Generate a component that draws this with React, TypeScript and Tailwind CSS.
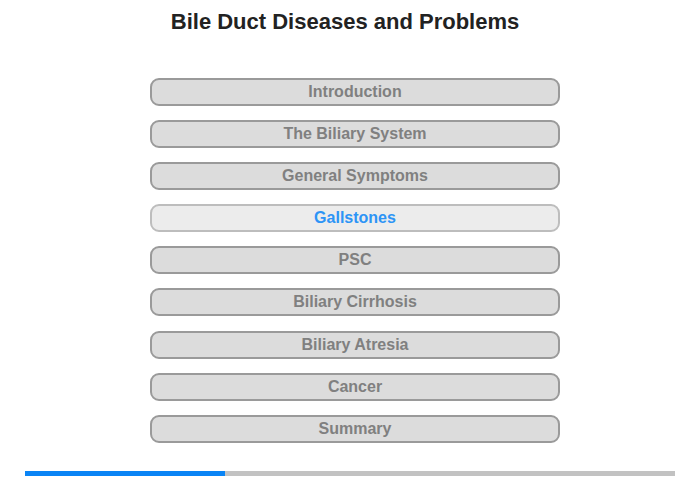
import React from "react";

const items = [
  "Introduction",
  "The Biliary System",
  "General Symptoms",
  "Gallstones",
  "PSC",
  "Biliary Cirrhosis",
  "Biliary Atresia",
  "Cancer",
  "Summary",
];

export default function App() {
  return (
    <div
      className="w-[700px] h-[480px] bg-white relative"
      style={{ fontFamily: '"Liberation Sans", Arial, sans-serif' }}
    >
      <div className="pt-[9px] pr-[10px] text-center text-[22px] leading-[26px] font-bold text-[#222]">
        Bile Duct Diseases and Problems
      </div>
      <div className="mt-[43px] pl-[10px] flex flex-col items-center gap-[14.1px]">
        {items.map((t) => {
          const active = t === "Gallstones";
          return (
            <div
              key={t}
              className={
                active
                  ? "w-[410px] h-[28px] rounded-[9px] border-2 border-[#bdbdbd] bg-[#ececec] flex items-center justify-center text-[16px] font-bold text-[#2d94f6]"
                  : "w-[410px] h-[28px] rounded-[9px] border-2 border-[#9a9a9a] bg-[#dcdcdc] flex items-center justify-center text-[16px] font-bold text-[#808080]"
              }
            >
              {t}
            </div>
          );
        })}
      </div>
      <div className="mt-[28px] mx-[25px] h-[5px] bg-[#c2c2c2] flex">
        <div className="w-[200px] h-full bg-[#0a84f5]" />
      </div>
    </div>
  );
}
